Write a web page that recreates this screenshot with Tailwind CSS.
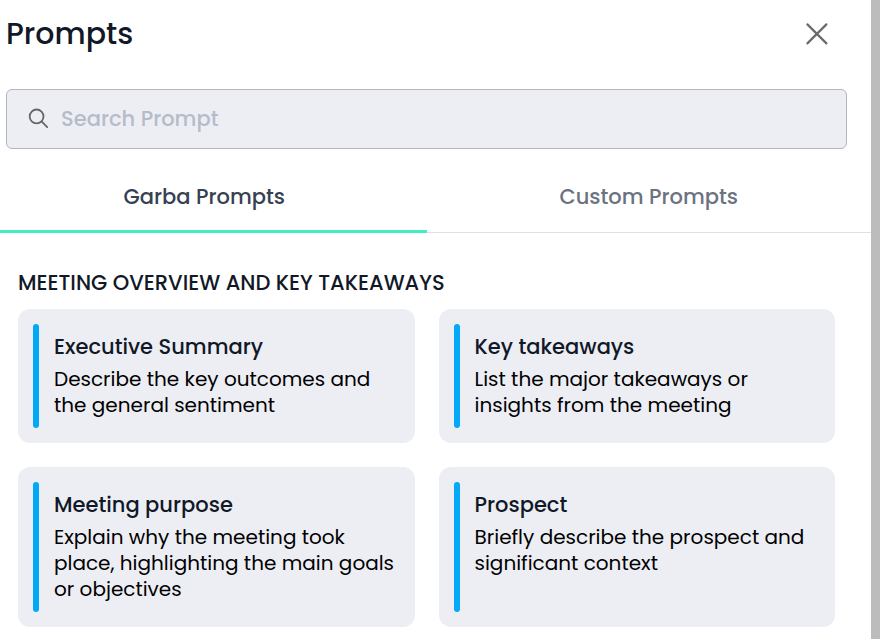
<!DOCTYPE html>
<html lang="en">
<head>
    <meta charset="UTF-8">
    <meta name="viewport" content="width=device-width, initial-scale=1.0">
    <title>Prompts</title>
    <script src="https://cdn.jsdelivr.net/npm/@tailwindcss/browser@4"></script>
</head>
<body class="bg-[#bcbcbc] min-h-screen pr-[9px] font-[Poppins,Inter,sans-serif] text-[#111827]">

    <!-- Prompts Panel -->
    <div class="min-h-screen bg-white overflow-hidden pb-3">

        <!-- Header -->
        <header class="flex items-center justify-between pl-1.5 pr-[38px] pt-3">
            <h1 class="text-[30px] leading-11 font-medium">Prompts</h1>
            <button type="button" aria-label="Close" class="p-1">
                <svg class="w-6 h-6" viewBox="0 0 24 24" fill="none" stroke="#000000" stroke-opacity="0.58" stroke-width="2.2" stroke-linecap="round">
                    <path d="M2.4 2.4 21.4 21.4M21.4 2.4 2.4 21.4"/>
                </svg>
            </button>
        </header>

        <!-- Search -->
        <div class="mt-[33px] ml-1.5 mr-6 h-15 flex items-center gap-2.5 px-5 bg-[#edeef4] border border-[#b4b5be] rounded-md">
            <svg class="w-6 h-6 shrink-0" viewBox="0 0 24 24" fill="none" stroke="#666666" stroke-width="1.8" stroke-linecap="round">
                <circle cx="9.6" cy="9.4" r="6.9"/>
                <path d="M14.6 14.4 20.2 20.1"/>
            </svg>
            <input type="text" aria-label="Search Prompt" placeholder="Search Prompt" class="w-full text-[21px] leading-8 font-medium outline-none placeholder:text-[#b5bcc9]">
        </div>

        <!-- Tabs -->
        <div role="tablist" class="mt-3 -ml-[18px] h-[72px] grid grid-cols-2 text-[21px] font-medium shadow-[inset_0_-1px_0_#dfdfdf]">
            <button type="button" role="tab" aria-selected="true" class="pt-[3px] text-[#374151] border-b-3 border-[#42eebd]">Garba Prompts</button>
            <button type="button" role="tab" aria-selected="false" class="pt-[3px] text-[#6b7280] border-b-3 border-transparent">Custom Prompts</button>
        </div>

        <!-- Prompt List -->
        <main class="pt-[34px] pl-[18px] pr-9">
            <h2 class="text-[21px] leading-8 font-medium">MEETING OVERVIEW AND KEY TAKEAWAYS</h2>

            <div class="mt-2.5 grid grid-cols-2 gap-6">
                <button type="button" class="flex gap-[15px] p-[15px] bg-[#edeef4] rounded-xl text-left">
                    <span class="w-1.5 shrink-0 self-stretch bg-[#03a9f9] rounded-full"></span>
                    <span class="flex flex-col gap-[5px] self-start pt-[9px] pb-2.5">
                        <span class="text-[21px] leading-7 font-medium">Executive Summary</span>
                        <span class="text-[20px] leading-[26px] text-black">Describe the key outcomes and the general sentiment</span>
                    </span>
                </button>

                <button type="button" class="flex gap-[15px] p-[15px] bg-[#edeef4] rounded-xl text-left">
                    <span class="w-1.5 shrink-0 self-stretch bg-[#03a9f9] rounded-full"></span>
                    <span class="flex flex-col gap-[5px] self-start pt-[9px] pb-2.5">
                        <span class="text-[21px] leading-7 font-medium">Key takeaways</span>
                        <span class="text-[20px] leading-[26px] text-black">List the major takeaways or insights from the meeting</span>
                    </span>
                </button>

                <button type="button" class="flex gap-[15px] p-[15px] bg-[#edeef4] rounded-xl text-left">
                    <span class="w-1.5 shrink-0 self-stretch bg-[#03a9f9] rounded-full"></span>
                    <span class="flex flex-col gap-[5px] self-start pt-[9px] pb-2.5">
                        <span class="text-[21px] leading-7 font-medium">Meeting purpose</span>
                        <span class="text-[20px] leading-[26px] text-black">Explain why the meeting took place, highlighting the main goals or objectives</span>
                    </span>
                </button>

                <button type="button" class="flex gap-[15px] p-[15px] bg-[#edeef4] rounded-xl text-left">
                    <span class="w-1.5 shrink-0 self-stretch bg-[#03a9f9] rounded-full"></span>
                    <span class="flex flex-col gap-[5px] self-start pt-[9px] pb-2.5">
                        <span class="text-[21px] leading-7 font-medium">Prospect</span>
                        <span class="text-[20px] leading-[26px] text-black">Briefly describe the prospect and significant context</span>
                    </span>
                </button>
            </div>
        </main>
    </div>

</body>
</html>
